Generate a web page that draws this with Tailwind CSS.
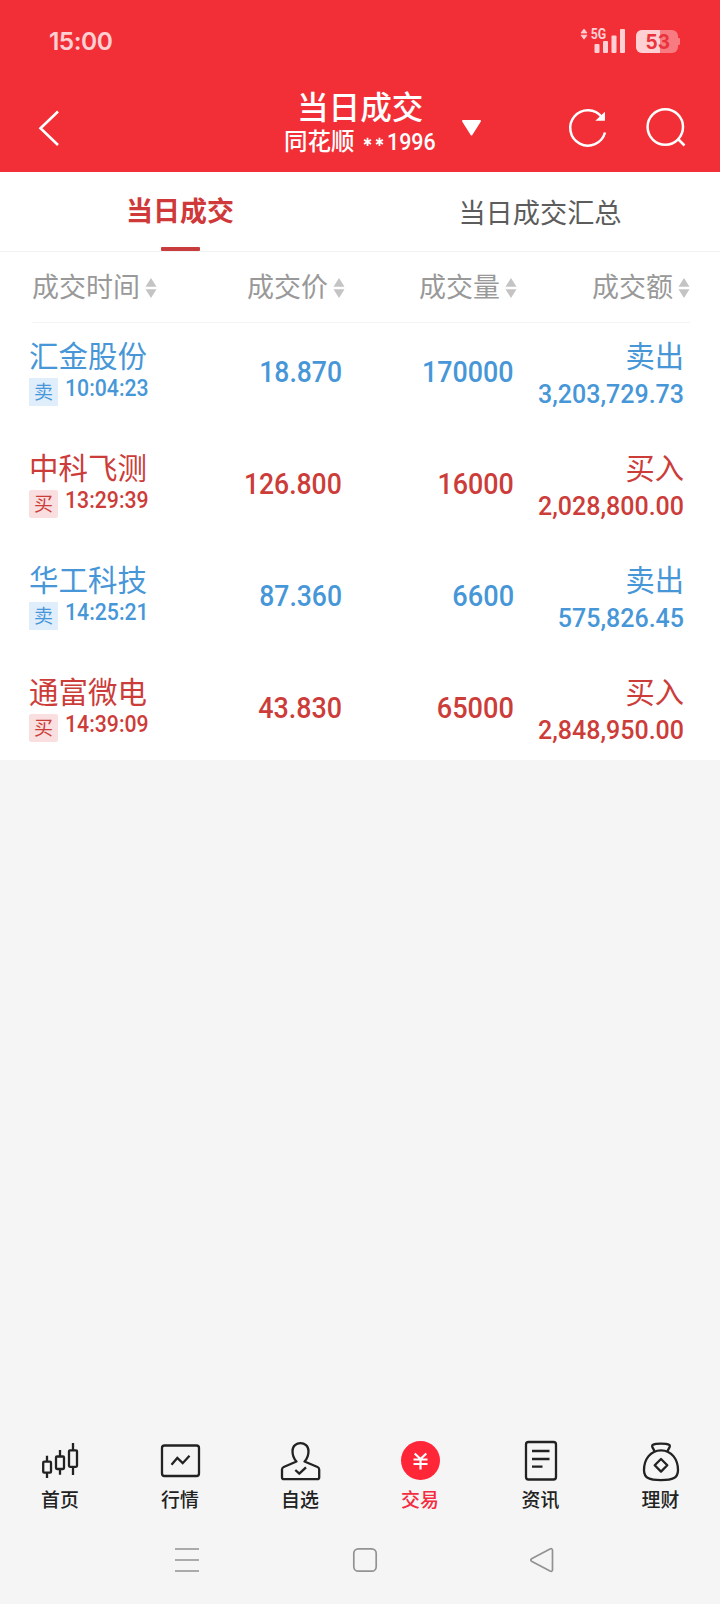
<!DOCTYPE html>
<html lang="zh-CN">
<head>
<meta charset="utf-8">
<title>当日成交</title>
<script src="https://cdn.jsdelivr.net/npm/@tailwindcss/browser@4"></script>
</head>
<body class="w-[720px] h-[1604px] bg-[#f5f5f5] flex flex-col overflow-hidden font-['Roboto','Noto_Sans_CJK_SC',sans-serif]">

<header class="h-[172px] shrink-0 bg-[#f22f37] flex flex-col">
  <div class="h-[84px] shrink-0 flex items-center justify-between pl-[49px] pr-10">
    <span class="font-['Inter',sans-serif] font-semibold text-[24.5px] leading-none text-[#ffd0d3] -mt-[2px] w-[70px] whitespace-nowrap tracking-[-0.5px]">15:00</span>
    <svg class="w-[100px] h-10" viewBox="0 0 100 40" fill="#ffd0d3">
      <path d="M4 7 1 11h6zM4 17.200 1 13.200h6z" stroke="#ffd0d3" stroke-width=".8"/>
      <text x="10.700" y="16.800" font-family="Roboto" font-weight="700" font-size="13.800" textLength="15.500" lengthAdjust="spacingAndGlyphs">5G</text>
      <rect x="14.500" y="22" width="5" height="9" rx="1"/>
      <rect x="23" y="19" width="5" height="12" rx="1"/>
      <rect x="31.500" y="13.500" width="5" height="17.500" rx="1"/>
      <rect x="40" y="7" width="5" height="24" rx="1"/>
      <path d="M62 8h30a6 6 0 0 1 6 6v11a6 6 0 0 1-6 6H62a6 6 0 0 1-6-6V14a6 6 0 0 1 6-6z" fill="#f77b80"/>
      <path d="M98 16h1a1 1 0 0 1 1 1v5a1 1 0 0 1-1 1h-1z" fill="#f77b80"/>
      <path d="M62 8h18v23H62a6 6 0 0 1-6-6V14a6 6 0 0 1 6-6z"/>
      <text x="65.500" y="27" font-family="Inter" font-weight="700" font-size="20" textLength="24.500" lengthAdjust="spacingAndGlyphs" fill="#ea333c">53</text>
    </svg>
  </div>
  <div class="h-[88px] flex items-center text-white">
    <svg class="w-[100px] h-[88px] shrink-0" viewBox="0 0 100 88" fill="none" stroke="#fff" stroke-width="2.600"><path d="M58 27.500 40.500 44.300 58 61"/></svg>
    <div class="w-[340px] pl-[181px] h-full flex flex-col whitespace-nowrap">
      <div class="text-[31.600px] leading-[50px] h-[46px] font-medium pl-[16px]">当日成交</div>
      <div class="text-[23.500px] leading-[24px] font-medium pl-[3px] flex items-center"><span>同花顺</span>
        <svg class="w-[24px] h-6 ml-[7px] relative -top-px" viewBox="0 0 24 24" stroke="#fff" stroke-width="1.900"><path d="M6 8.500v9M2.200 10.700l7.600 4.600M9.800 10.700l-7.600 4.600M19 8.500v9M15.200 10.700l7.600 4.600M22.800 10.700l-7.600 4.600"/></svg>
        <span class="inline-block origin-left scale-x-[.91] ml-[3px]">1996</span>
      </div>
    </div>
    <svg class="w-[280px] h-[88px] shrink-0" viewBox="440 84 280 88" fill="none" stroke="#fff" stroke-width="2.500">
      <path d="M463 121h17l-8.500 13.500z" fill="#fff" stroke-width="2" stroke-linejoin="round"/>
      <path d="M602 117.200A17.700 17.700 0 1 0 605 132.500"/><path d="M604.200 113.500v6.500h-7z" fill="#fff" stroke-width="1.500"/>
      <circle cx="665.300" cy="127" r="17.700"/><path d="m677.500 138.500 7 7"/>
    </svg>
  </div>
</header>

<nav class="h-20 shrink-0 bg-white grid grid-cols-2 border-b border-[#f2f2f2] text-center">
  <div class="flex flex-col items-center justify-between text-[#d0393a] font-bold text-[27px]"><span class="leading-[80px] h-[70px]">当日成交</span><span class="w-[39px] h-1 bg-[#c83c3e] rounded-[1px]"></span></div>
  <div class="text-[#5c5c5c] text-[27.200px] leading-[84px] h-[79px]">当日成交汇总</div>
</nav>

<main class="bg-white h-[508px] shrink-0 overflow-hidden">
  <div class="mx-8 mr-[30px] h-[71px] border-b border-[#f5f5f5] grid grid-cols-[125px_188px_172px_173px] text-[#999] text-[27px] leading-[73px] whitespace-nowrap">
    <div class="flex items-center justify-end gap-[5px]"><span>成交时间</span><svg class="w-3 h-5 -mt-[2px]" viewBox="0 0 12 20" fill="#c4c4c4"><path d="M6 0l5.500 8.700H.5zM6 20l5.500-8.700H.5z"/></svg></div>
    <div class="flex items-center justify-end gap-[5px]"><span>成交价</span><svg class="w-3 h-5 -mt-[2px]" viewBox="0 0 12 20" fill="#c4c4c4"><path d="M6 0l5.500 8.700H.5zM6 20l5.500-8.700H.5z"/></svg></div>
    <div class="flex items-center justify-end gap-[5px]"><span>成交量</span><svg class="w-3 h-5 -mt-[2px]" viewBox="0 0 12 20" fill="#c4c4c4"><path d="M6 0l5.500 8.700H.5zM6 20l5.500-8.700H.5z"/></svg></div>
    <div class="flex items-center justify-end gap-[5px]"><span>成交额</span><svg class="w-3 h-5 -mt-[2px]" viewBox="0 0 12 20" fill="#c4c4c4"><path d="M6 0l5.500 8.700H.5zM6 20l5.500-8.700H.5z"/></svg></div>
  </div>

  <section class="h-28 grid grid-cols-[170px_143px_172px_170px] pl-[29px] text-[#4797d8] whitespace-nowrap">
    <div class="pt-[14px]"><div class="text-[29.500px] leading-[41px]">汇金股份</div>
      <div class="flex h-7"><span class="w-[29px] h-7 bg-[#e0edfb] text-[19px] leading-[29px] text-center">卖</span><span class="ml-[7px] text-[24px] leading-[21px] font-medium inline-block origin-left scale-x-[.885]">10:04:23</span></div></div>
    <div class="text-right pt-[31px]"><span class="text-[29.500px] leading-9 font-medium inline-block origin-right scale-x-[.90]">18.870</span></div>
    <div class="text-right pt-[31px]"><span class="text-[29.500px] leading-9 font-medium inline-block origin-right scale-x-[.91]">170000</span></div>
    <div class="text-right pt-[14px]"><div class="text-[29.300px] leading-[40px]">卖出</div><div class="text-[25px] leading-[35px] font-medium">3,203,729.73</div></div>
  </section>
  <section class="h-28 grid grid-cols-[170px_143px_172px_170px] pl-[29px] text-[#cc3c39] whitespace-nowrap">
    <div class="pt-[14px]"><div class="text-[29.500px] leading-[41px]">中科飞测</div>
      <div class="flex h-7"><span class="w-[29px] h-7 rounded-[2px] bg-[#f9dfdf] text-[19px] leading-[29px] text-center">买</span><span class="ml-[7px] text-[24px] leading-[21px] font-medium inline-block origin-left scale-x-[.885]">13:29:39</span></div></div>
    <div class="text-right pt-[31px]"><span class="text-[29.500px] leading-9 font-medium inline-block origin-right scale-x-[.90]">126.800</span></div>
    <div class="text-right pt-[31px]"><span class="text-[29.500px] leading-9 font-medium inline-block origin-right scale-x-[.91]">16000</span></div>
    <div class="text-right pt-[14px]"><div class="text-[29.300px] leading-[40px]">买入</div><div class="text-[25px] leading-[35px] font-medium">2,028,800.00</div></div>
  </section>
  <section class="h-28 grid grid-cols-[170px_143px_172px_170px] pl-[29px] text-[#4797d8] whitespace-nowrap">
    <div class="pt-[14px]"><div class="text-[29.500px] leading-[41px]">华工科技</div>
      <div class="flex h-7"><span class="w-[29px] h-7 bg-[#e0edfb] text-[19px] leading-[29px] text-center">卖</span><span class="ml-[7px] text-[24px] leading-[21px] font-medium inline-block origin-left scale-x-[.885]">14:25:21</span></div></div>
    <div class="text-right pt-[31px]"><span class="text-[29.500px] leading-9 font-medium inline-block origin-right scale-x-[.90]">87.360</span></div>
    <div class="text-right pt-[31px]"><span class="text-[29.500px] leading-9 font-medium inline-block origin-right scale-x-[.92]">6600</span></div>
    <div class="text-right pt-[14px]"><div class="text-[29.300px] leading-[40px]">卖出</div><div class="text-[25px] leading-[35px] font-medium">575,826.45</div></div>
  </section>
  <section class="h-28 grid grid-cols-[170px_143px_172px_170px] pl-[29px] text-[#cc3c39] whitespace-nowrap">
    <div class="pt-[14px]"><div class="text-[29.500px] leading-[41px]">通富微电</div>
      <div class="flex h-7"><span class="w-[29px] h-7 rounded-[2px] bg-[#f9dfdf] text-[19px] leading-[29px] text-center">买</span><span class="ml-[7px] text-[24px] leading-[21px] font-medium inline-block origin-left scale-x-[.885]">14:39:09</span></div></div>
    <div class="text-right pt-[31px]"><span class="text-[29.500px] leading-9 font-medium inline-block origin-right scale-x-[.91]">43.830</span></div>
    <div class="text-right pt-[31px]"><span class="text-[29.500px] leading-9 font-medium inline-block origin-right scale-x-[.92]">65000</span></div>
    <div class="text-right pt-[14px]"><div class="text-[29.300px] leading-[40px]">买入</div><div class="text-[25px] leading-[35px] font-medium">2,848,950.00</div></div>
  </section>
</main>

<div class="flex-1"></div>

<nav class="h-[82px] shrink-0 grid grid-cols-6 text-[18.900px] leading-[37px] font-medium text-[#222]">
  <div class="flex flex-col items-center"><svg class="w-[60px] h-11 shrink-0" viewBox="30 1438 60 44" fill="none" stroke="#222" stroke-width="2.300"><path d="M47 1455.700v6M47 1472.300v5.700M60 1450v6.500M60 1469v5.700M73 1443v7.500M73 1466.500v8.500"/><rect x="43.200" y="1461.700" width="7.800" height="11" rx="1"/><rect x="56" y="1456.500" width="8" height="12.500" rx="1"/><rect x="69" y="1450.300" width="8" height="16.500" rx="1"/></svg><span>首页</span></div>
  <div class="flex flex-col items-center"><svg class="w-[60px] h-11 shrink-0" viewBox="150 1438 60 44" fill="none" stroke="#222" stroke-width="2.300"><rect x="162" y="1445.500" width="37" height="30.500" rx="2.500"/><path d="m171.500 1464.700 5.800-6.700 5.400 5.200 6.800-7.500"/></svg><span>行情</span></div>
  <div class="flex flex-col items-center"><svg class="w-[60px] h-11 shrink-0" viewBox="270 1438 60 44" fill="none" stroke="#222" stroke-width="2.300" stroke-linejoin="round"><path d="M296.500 1461.500C293 1458 292.500 1454 292.500 1451C292.500 1440.500 308.500 1440.500 308.500 1451C308.500 1454 308 1458 304.500 1461.500L317.500 1467Q319.200 1467.700 319.200 1469.500V1477.200Q319.200 1479.200 317.200 1479.200H284Q282 1479.200 282 1477.200V1469.500Q282 1467.700 283.700 1467z"/><path d="m295.300 1470 4 3.700 6.700-6.400"/></svg><span>自选</span></div>
  <div class="flex flex-col items-center text-[#f42c3e]"><svg class="w-[60px] h-11 shrink-0" viewBox="390 1438 60 44" fill="none" stroke="#fff" stroke-width="2.200"><circle cx="420.500" cy="1460.500" r="19.500" fill="#ff2638" stroke="none"/><path d="m414.700 1453.500 5.800 5.500 5.800-5.500M413.500 1459.500h14M413.500 1464h14M420.500 1459v10.500"/></svg><span>交易</span></div>
  <div class="flex flex-col items-center"><svg class="w-[60px] h-11 shrink-0" viewBox="510 1438 60 44" fill="none" stroke="#222" stroke-width="2.300"><rect x="526" y="1442" width="30" height="37.500" rx="2.500"/><path d="M532 1451h17.500M532 1459h17.500M532 1466.700h10.500"/></svg><span class="pl-px">资讯</span></div>
  <div class="flex flex-col items-center"><svg class="w-[60px] h-11 shrink-0" viewBox="630 1438 60 44" fill="none" stroke="#222" stroke-width="2.300" stroke-linejoin="round"><path d="M654.500 1451.500C654 1449 651 1446.500 652.500 1445C656 1443.200 666 1443.200 669.500 1445C671 1446.500 668 1449 667.500 1451.500"/><path d="M661 1450.300C650 1450.300 644 1460 644 1470C644 1478 649 1480.200 661 1480.200S678 1478 678 1470C678 1460 672 1450.300 661 1450.300z"/><path d="m661 1459 6.300 6.300-6.300 6.300-6.300-6.300z"/></svg><span class="pl-px">理财</span></div>
</nav>

<footer class="h-[84px] shrink-0">
  <svg class="w-[720px] h-[84px]" viewBox="0 1520 720 84" fill="none" stroke="#929292" stroke-width="1.700"><path d="M175 1549h24M175 1560h24M175 1571h24"/><rect x="353.800" y="1548.800" width="22.400" height="22.400" rx="4.500"/><path d="M532 1558.500 550 1549Q552.500 1548 552.500 1550.500V1569.500Q552.500 1572 550 1571L532 1561.500Q529.500 1560 532 1558.500z"/></svg>
</footer>
</body>
</html>
